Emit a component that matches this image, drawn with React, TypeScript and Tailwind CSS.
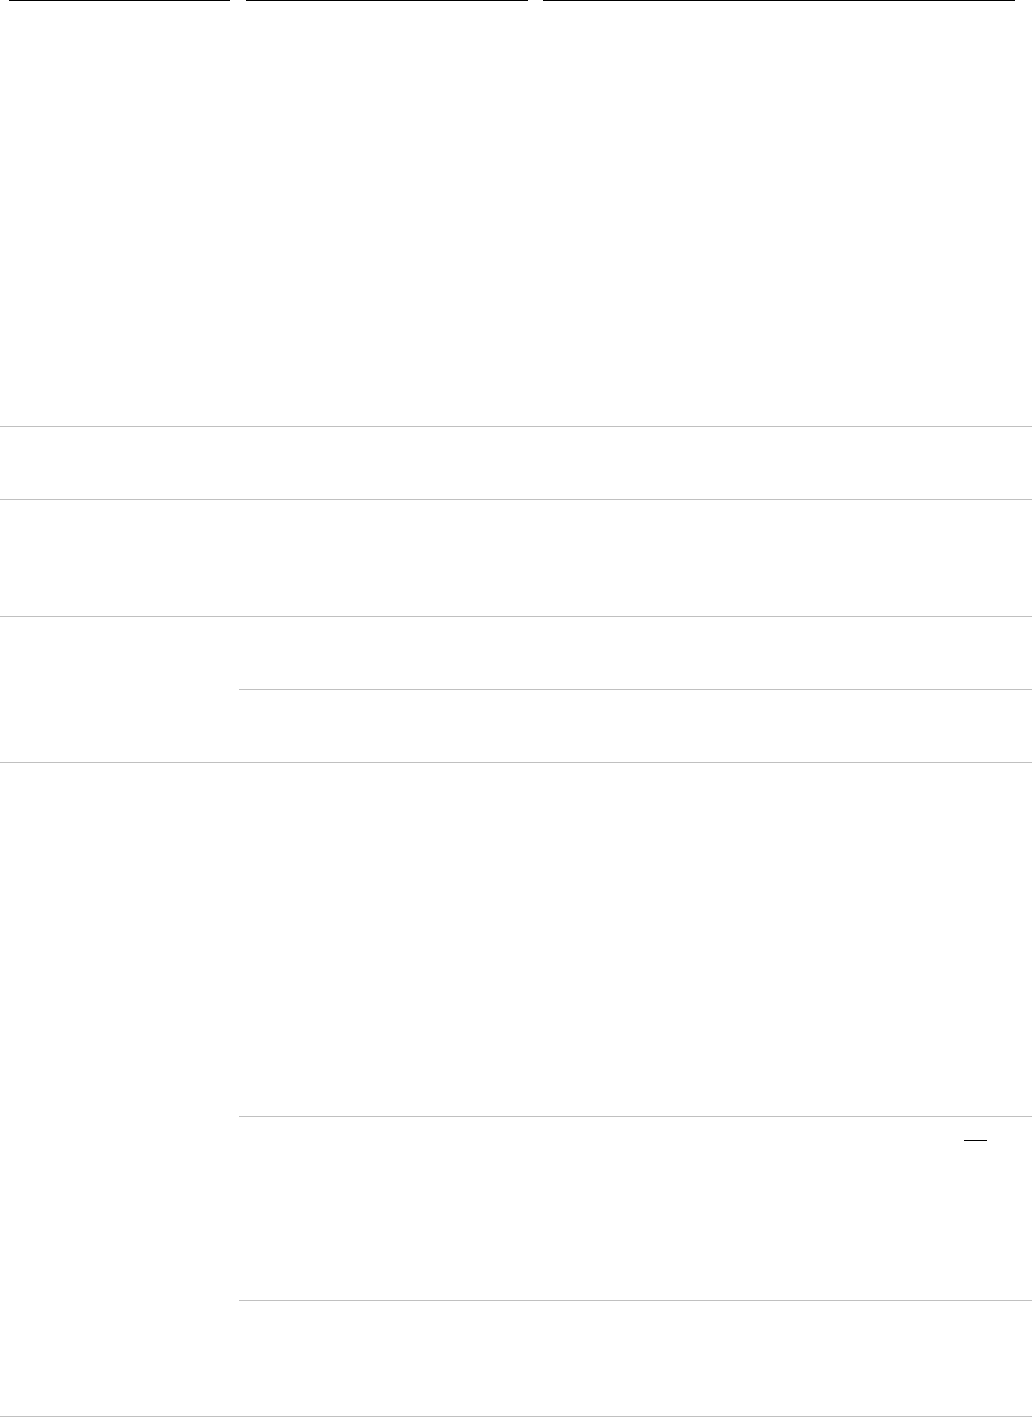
import React from "react";

export default function App() {
  const line = "h-px bg-[#c0c0c0]";
  return (
    <div className="w-[1032px] h-[1417px] bg-white flex flex-col" style={{ fontFamily: '"Liberation Sans", Arial, sans-serif' }}>
      {/* header area */}
      <div className="h-[426px] flex">
        <div className="w-[239px] px-[9px]">
          <div className="h-px bg-black" />
        </div>
        <div className="w-[297px] pl-[7px] pr-[8px]">
          <div className="h-px bg-black" />
        </div>
        <div className="flex-1 pl-[7px] pr-[17px]">
          <div className="h-px bg-black" />
        </div>
      </div>
      <div className={line} />
      <div className="h-[72px]" />
      <div className={line} />
      <div className="h-[116px]" />
      <div className={line} />
      <div className="flex">
        <div className="w-[239px]" />
        <div className="flex-1 flex flex-col">
          <div className="h-[72px]" />
          <div className={line} />
          <div className="h-[72px]" />
        </div>
      </div>
      <div className={line} />
      <div className="flex">
        <div className="w-[239px]" />
        <div className="flex-1 flex flex-col">
          <div className="h-[353px]" />
          <div className={line} />
          <div className="h-[183px] relative">
            <div className="absolute left-[725px] top-[23px] w-[23px] h-px bg-black" />
          </div>
          <div className={line} />
          <div className="h-[115px]" />
        </div>
      </div>
      <div className={line} />
    </div>
  );
}
